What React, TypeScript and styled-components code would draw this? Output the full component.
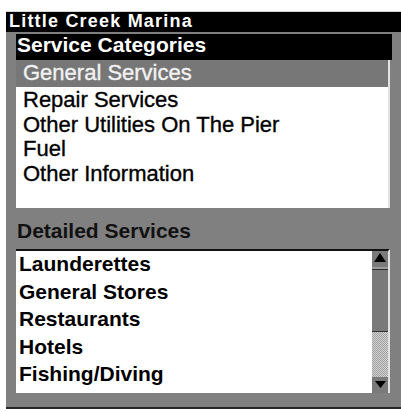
import React from "react";
import styled, { createGlobalStyle } from "styled-components";

const Global = createGlobalStyle`
  html, body { margin: 0; padding: 0; background: #fff; }
  body { font-family: "Liberation Sans", Arial, sans-serif; }
`;

const Frame = styled.div`
  margin: 12px 0 0 6px;
  width: 395px;
  background: #808080;
  border-bottom: 2px solid #262626;
  box-shadow: 0 -1px 0 #d4d4d4;
`;

const TitleBar = styled.div`
  height: 20px;
  box-sizing: border-box;
  padding-left: 3px;
  background: #000;
  color: #fff;
  font-weight: bold;
  font-size: 18px;
  line-height: 18px;
  letter-spacing: 1.2px;
  white-space: nowrap;
`;

const Body = styled.div`
  padding: 2px 11px 14px 10px;
  display: flex;
  flex-direction: column;
`;

const CategoryBar = styled.div`
  height: 26px;
  box-sizing: border-box;
  margin-right: -2px;
  padding: 0 0 4px 1px;
  background: #000;
  color: #fff;
  font-weight: bold;
  font-size: 21px;
  line-height: 22px;
  white-space: nowrap;
`;

const CategoryBox = styled.div`
  height: 148px;
  box-sizing: border-box;
  background: #fff;
  border-right: 2px solid #e2e2e2;
  display: flex;
  flex-direction: column;
`;

const CategoryItem = styled.div<{ $selected?: boolean }>`
  box-sizing: border-box;
  height: ${(p) => (p.$selected ? "27px" : "24.5px")};
  line-height: ${(p) => (p.$selected ? "25px" : "23.5px")};
  padding: ${(p) => (p.$selected ? "0 0 2px 7px" : "1px 0 0 7px")};
  background: ${(p) => (p.$selected ? "#777" : "transparent")};
  color: ${(p) => (p.$selected ? "#f2f2f2" : "#000")};
  -webkit-text-stroke: 0.35px currentColor;
  font-size: 22px;
  white-space: nowrap;
`;

const SectionLabel = styled.div`
  margin: 11px 0 6px 1px;
  height: 24px;
  line-height: 24px;
  font-weight: bold;
  font-size: 21px;
  color: #111;
  white-space: nowrap;
`;

const DetailBox = styled.div`
  height: 144px;
  box-sizing: border-box;
  display: flex;
  background: #fff;
  border-top: 2px solid #111;
  border-right: 2px solid #e2e2e2;
`;

const DetailList = styled.div`
  flex: 1;
  padding-left: 3px;
  display: flex;
  flex-direction: column;
`;

const DetailItem = styled.div`
  box-sizing: border-box;
  height: 27.5px;
  line-height: 25.5px;
  padding-bottom: 2px;
  font-weight: bold;
  font-size: 21px;
  color: #000;
  white-space: nowrap;
`;

const Scrollbar = styled.div`
  width: 16px;
  display: flex;
  flex-direction: column;
  background: #7a7a7a;
`;

const ScrollButton = styled.div<{ $h: number; $pad: number }>`
  height: ${(p) => p.$h}px;
  box-sizing: border-box;
  padding-top: ${(p) => p.$pad}px;
  display: flex;
  justify-content: center;
  align-items: flex-start;
`;

const UpButton = styled(ScrollButton)`
  border-bottom: 1px solid #2e2e2e;
  box-shadow: inset 0 -2px 0 #9a9a9a;
`;

const Track = styled.div`
  flex: 1;
`;

const Thumb = styled.div`
  height: 46px;
  box-sizing: border-box;
  border-top: 1px solid #333;
  background: repeating-conic-gradient(#d2d2d2 0 25%, #a0a0a0 0 50%) 0 0 / 2px 2px;
`;

const categories = [
  "General Services",
  "Repair Services",
  "Other Utilities On The Pier",
  "Fuel",
  "Other Information",
];

const details = [
  "Launderettes",
  "General Stores",
  "Restaurants",
  "Hotels",
  "Fishing/Diving",
];

export default function App() {
  return (
    <>
      <Global />
      <Frame>
        <TitleBar>Little Creek Marina</TitleBar>
        <Body>
          <CategoryBar>Service Categories</CategoryBar>
          <CategoryBox>
            {categories.map((c, i) => (
              <CategoryItem key={c} $selected={i === 0}>
                {c}
              </CategoryItem>
            ))}
          </CategoryBox>
          <SectionLabel>Detailed Services</SectionLabel>
          <DetailBox>
            <DetailList>
              {details.map((d) => (
                <DetailItem key={d}>{d}</DetailItem>
              ))}
            </DetailList>
            <Scrollbar>
              <UpButton $h={19} $pad={2}>
                <svg width="12" height="9" viewBox="0 0 12 9">
                  <polygon points="6,0 12,9 0,9" fill="#000" />
                </svg>
              </UpButton>
              <Track />
              <Thumb />
              <ScrollButton $h={16} $pad={4}>
                <svg width="11" height="7" viewBox="0 0 11 7">
                  <polygon points="0,0 11,0 5.5,7" fill="#000" />
                </svg>
              </ScrollButton>
            </Scrollbar>
          </DetailBox>
        </Body>
      </Frame>
    </>
  );
}
